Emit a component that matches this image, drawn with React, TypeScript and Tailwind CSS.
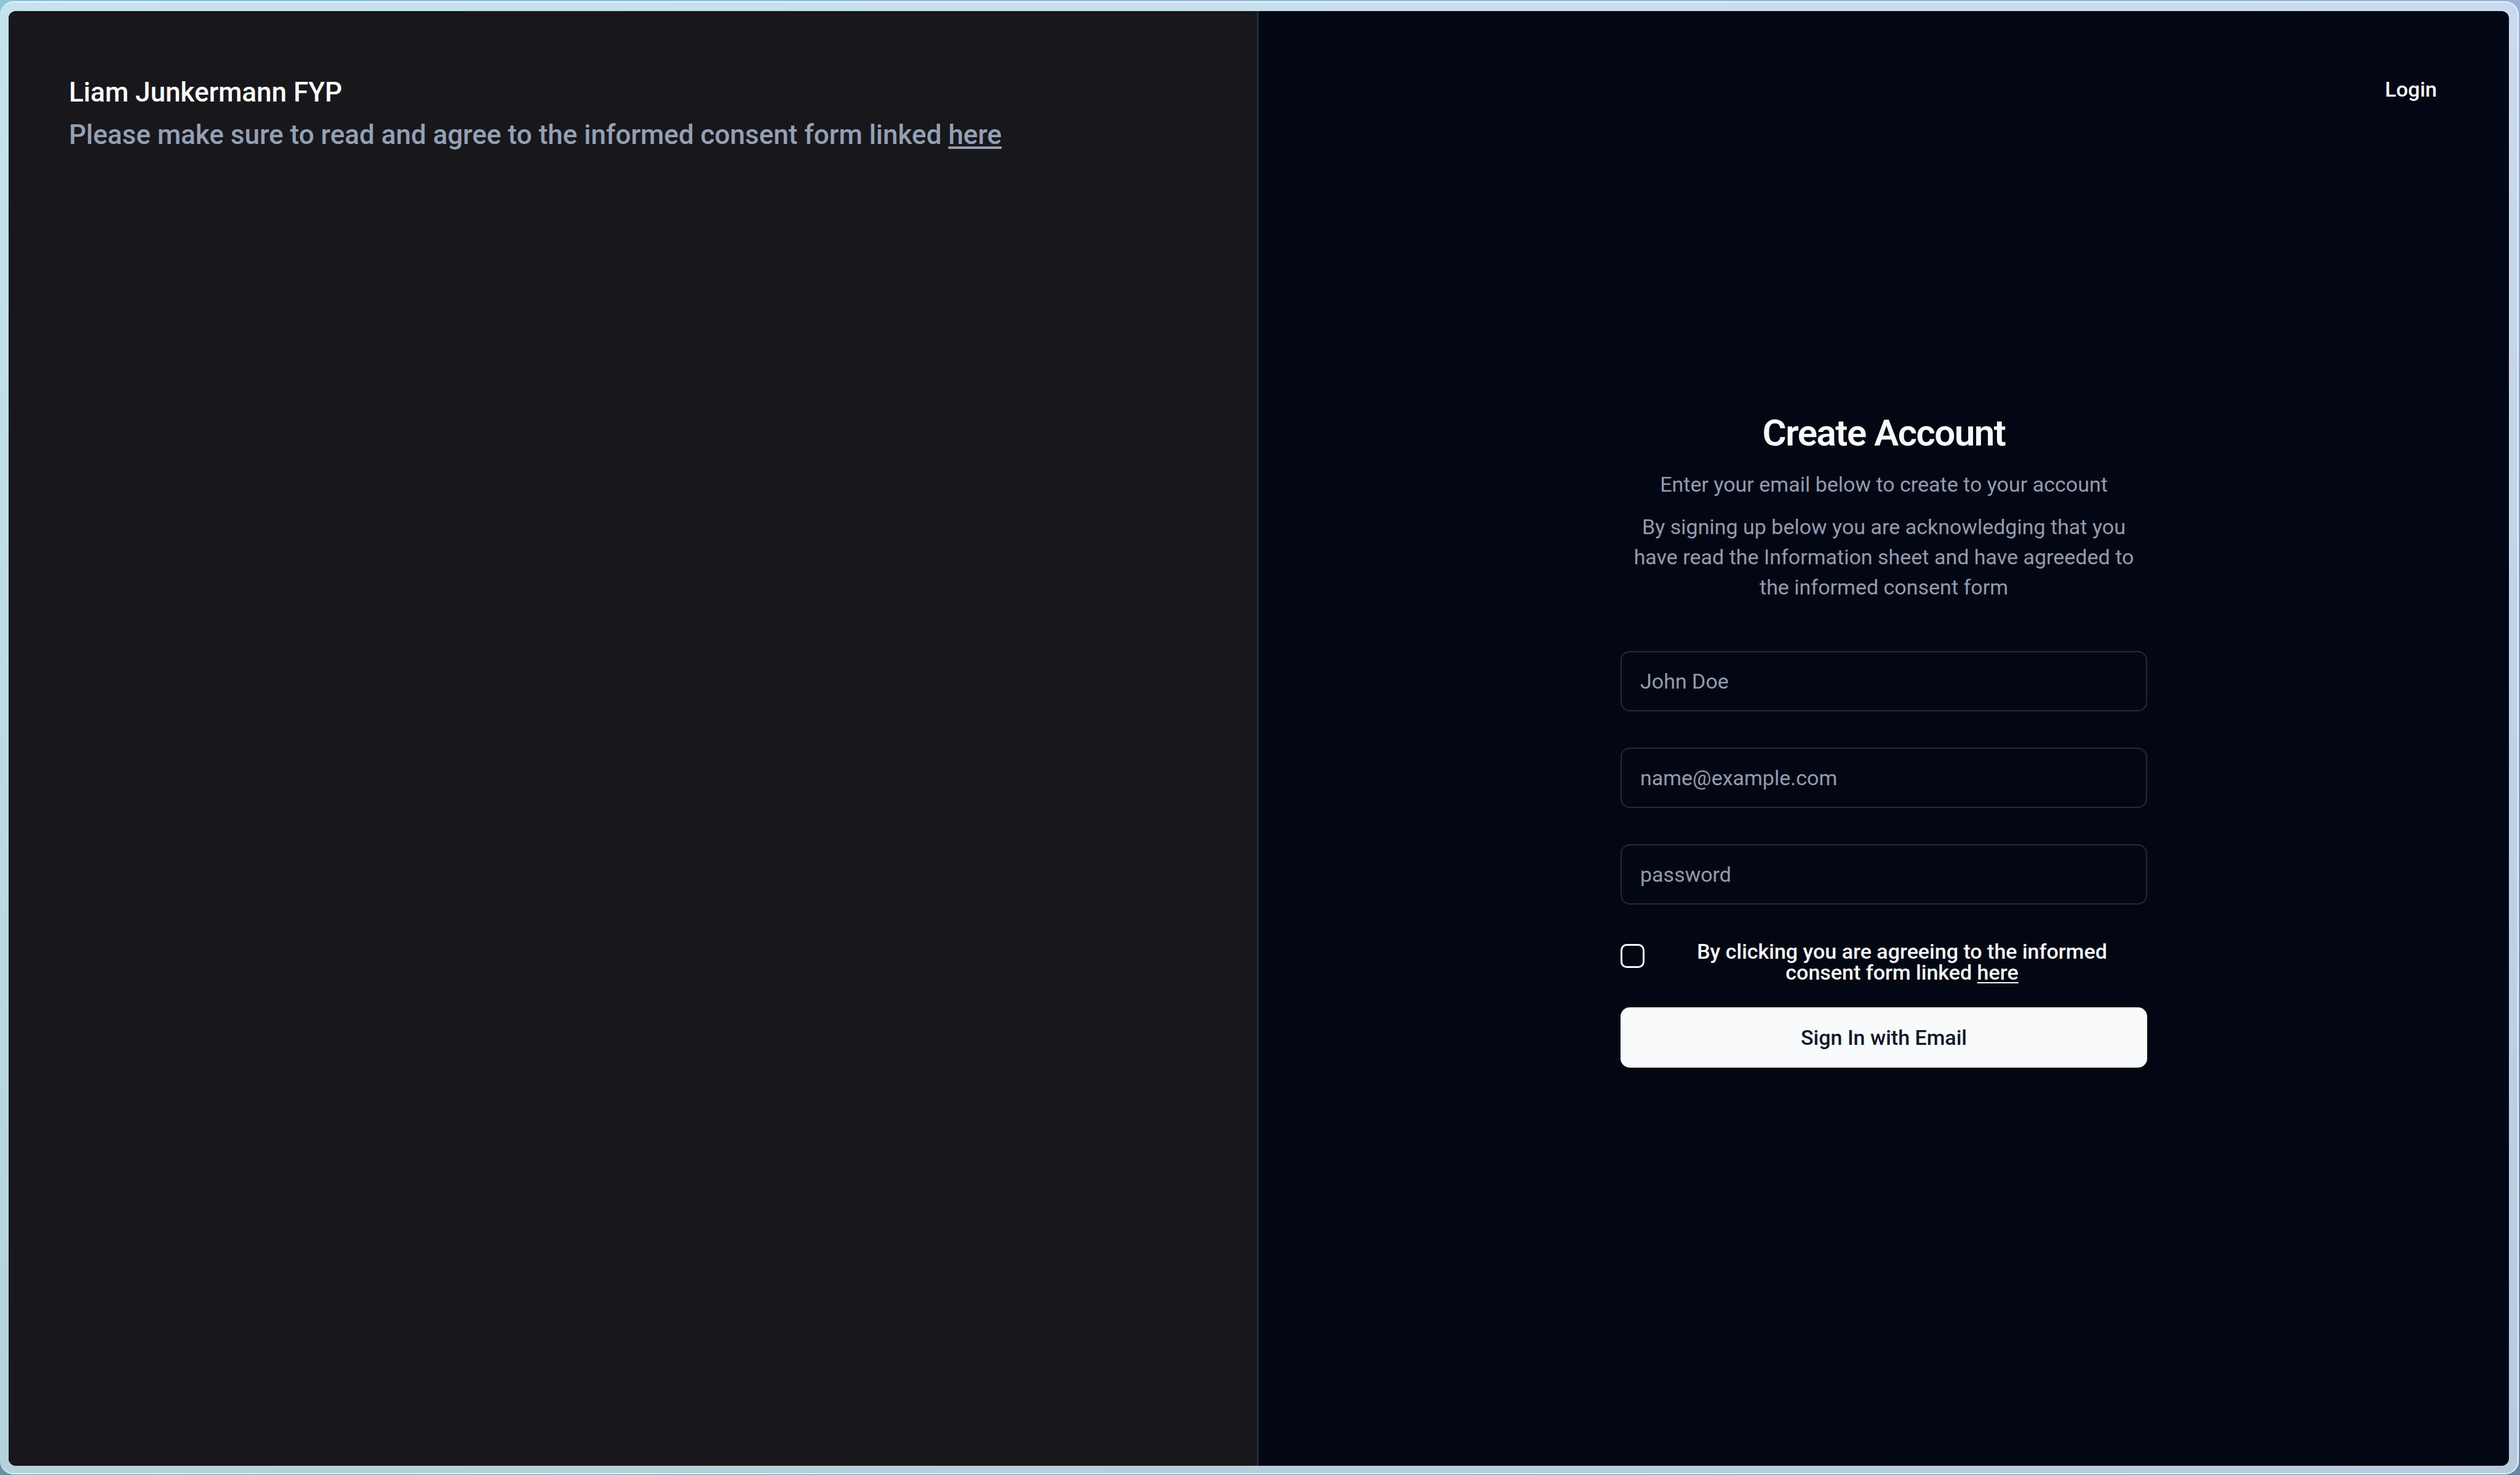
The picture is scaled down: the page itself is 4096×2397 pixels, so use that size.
import React from "react";

type FieldProps = { id: string; label: string; type: string; placeholder: string };

function Field({ id, label, type, placeholder }: FieldProps) {
  return (
    <input
      id={id}
      type={type}
      aria-label={label}
      placeholder={placeholder}
      className="h-[98px] w-full rounded-[15px] border-2 border-[#232a38] bg-transparent px-[30px] text-[34px] leading-[49px] text-slate-50 outline-none placeholder:text-[#929cae]"
    />
  );
}

function IntroPanel() {
  return (
    <section className="border-r-[3px] border-[#222a35] bg-[#18181c] p-[98px] text-[44px] font-medium leading-[69px]">
      <h2 className="text-white">Liam Junkermann FYP</h2>
      <p className="text-[#94a0b4]">
        Please make sure to read and agree to the informed consent form linked{" "}
        <a href="#consent" className="underline decoration-[4px] underline-offset-[4px]">
          here
        </a>
      </p>
    </section>
  );
}

function SignUpForm() {
  return (
    <form className="flex flex-col" onSubmit={(e) => e.preventDefault()}>
      <div className="flex flex-col gap-[59px]">
        <Field id="name" label="Name" type="text" placeholder="John Doe" />
        <Field id="email" label="Email" type="email" placeholder="name@example.com" />
        <Field id="password" label="Password" type="password" placeholder="password" />
        <div className="flex items-start gap-[20px]">
          <div className="flex h-[49px] items-center">
            <input
              id="consent"
              type="checkbox"
              className="size-[39px] appearance-none rounded-[10px] border-[3px] border-slate-50 bg-transparent checked:bg-slate-50"
            />
          </div>
          <label
            htmlFor="consent"
            className="flex-1 text-center text-[34px] font-medium leading-[34px] text-slate-50"
          >
            By clicking you are agreeing to the informed consent form linked{" "}
            <a
              href="#consent-form"
              className="inline-block underline decoration-2 underline-offset-[4px]"
            >
              here
            </a>
          </label>
        </div>
      </div>
      <button
        type="submit"
        className="mt-[40px] h-[98px] rounded-[15px] bg-slate-50 text-[34px] font-medium leading-[49px] text-slate-900"
      >
        Sign In with Email
      </button>
    </form>
  );
}

export default function App() {
  return (
    <div className="h-screen overflow-hidden bg-[linear-gradient(to_bottom,transparent,rgba(0,30,40,0.3)),linear-gradient(to_right,#8fc3d8,#98b0d8)] pt-[2px] pr-[2px] pb-[1px] font-[Roboto,sans-serif]">
      <div className="h-full rounded-[22px] border-[2px] border-l-0 border-[#e6f5fa] bg-[linear-gradient(to_bottom,transparent,rgba(10,40,50,0.09)),linear-gradient(to_right,#c6e2ec,#c9daee)] pt-[14px] pr-[14px] pb-[12px] pl-[14px]">
        <main className="relative grid h-full grid-cols-2 overflow-hidden rounded-[12px] bg-[#020713]">
          <IntroPanel />
          <section className="flex items-center justify-center">
            <div className="flex w-[856px] flex-col gap-[79px]">
              <header className="flex flex-col gap-[20px] text-center text-[34px] leading-[49px] text-[#929cae]">
                <h1 className="text-[60px] font-semibold leading-[78px] tracking-tight text-slate-50">
                  Create Account
                </h1>
                <p>Enter your email below to create to your account</p>
                <p>
                  By signing up below you are acknowledging that you have read the Information sheet
                  and have agreeded to the informed consent form
                </p>
              </header>
              <SignUpForm />
            </div>
          </section>
          <a
            href="#login"
            className="absolute top-[78px] right-[78px] flex h-[98px] items-center px-[39px] text-[34px] font-medium text-slate-50"
          >
            Login
          </a>
        </main>
      </div>
    </div>
  );
}
